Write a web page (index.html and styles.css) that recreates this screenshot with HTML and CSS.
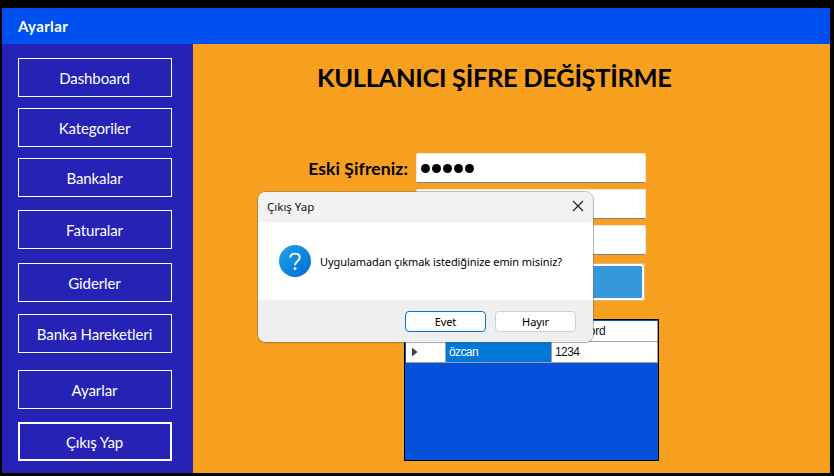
FILE: index.html
```html
<!DOCTYPE html>
<html lang="tr">
<head>
<meta charset="utf-8">
<title>Ayarlar</title>
<link rel="stylesheet" href="styles.css">
</head>
<body>
<div class="window">
  <header class="titlebar">Ayarlar</header>
  <div class="content">
    <nav class="sidebar">
      <button class="nav dashboard">Dashboard</button>
      <button class="nav categories">Kategoriler</button>
      <button class="nav banks">Bankalar</button>
      <button class="nav invoices">Faturalar</button>
      <button class="nav expenses">Giderler</button>
      <button class="nav movements">Banka Hareketleri</button>
      <button class="nav settings">Ayarlar</button>
      <button class="nav exit">Çıkış Yap</button>
    </nav>
    <main class="panel">
      <h1><span>KULLANICI ŞİFRE DEĞİŞTİRME</span></h1>
      <div class="form">
        <div class="row"><label>Eski Şifreniz:</label><div class="field"><i></i><i></i><i></i><i></i><i></i></div></div>
        <div class="row"><div class="field"></div></div>
        <div class="row"><div class="field"></div></div>
        <div class="submit"></div>
      </div>
      <div class="table">
        <div class="tr head"><div class="mark"></div><div class="td"></div><div class="td pass">Password</div></div>
        <div class="tr"><div class="mark"><svg width="6" height="10" viewBox="0 0 6 10"><path d="M0 0.5 5.5 5 0 9.5z" fill="#404040"/></svg></div><div class="td selected">özcan</div><div class="td">1234</div></div>
      </div>
    </main>
  </div>
</div>
<div class="dialog">
  <div class="dialog-title"><span>Çıkış Yap</span><svg width="12" height="12" viewBox="0 0 12 12"><path d="M1 1 11 11M11 1 1 11" stroke="#222" stroke-width="1.2" fill="none"/></svg></div>
  <div class="dialog-body">
    <svg width="32" height="32" viewBox="0 0 32 32">
      <defs><linearGradient id="g" x1="0" y1="0" x2="1" y2="1"><stop offset=".1" stop-color="#1e9fe8"/><stop offset=".9" stop-color="#0070d4"/></linearGradient></defs>
      <circle cx="16" cy="16" r="16" fill="url(#g)"/>
      <path d="M11.3 12.8C11.3 10 13.2 8.6 16 8.6c2.800 0 4.700 1.600 4.700 4 0 3.600-4.600 3.600-4.600 7.600" fill="none" stroke="#fff" stroke-width="1.900"/>
      <circle cx="16.100" cy="23.700" r="1.400" fill="#fff"/>
    </svg>
    <span>Uygulamadan çıkmak istediğinize emin misiniz?</span>
  </div>
  <div class="dialog-foot"><button class="yes">Evet</button><button>Hayır</button></div>
</div>
</body>
</html>
```
FILE: styles.css
```css
* { box-sizing: border-box; }
body { margin: 0; width: 834px; height: 476px; background: #000; padding: 8px 4px 3px 2px; overflow: hidden; }
button { margin: 0; padding: 0; white-space: nowrap; }
.window { width: 828px; height: 465px; display: flex; flex-direction: column; }
.titlebar { height: 36px; padding-left: 16px; background: #0050f0; color: #fff; font: bold 15px/37px Lato, sans-serif; letter-spacing: .35px; }
.content { flex: 1; display: flex; }
.sidebar { width: 191px; padding: 14px 0 0 16px; background: #2622b5; display: flex; flex-direction: column; }
.nav { width: 154px; height: 39px; margin-bottom: 11px; padding: 0 1px 0 0; border: 1px solid #fff; background: transparent; color: #fff; font: 15px Lato, sans-serif; letter-spacing: -.1px; }
.banks { margin-bottom: 13px; }
.invoices { margin-bottom: 14px; }
.expenses { margin-bottom: 12px; }
.movements { margin-bottom: 17px; }
.settings { margin-bottom: 13px; }
.nav.exit { border-width: 2px; }
.panel { flex: 1; background: #f7a020; }
h1 { margin: 15px 0 0 124px; height: 37px; font: bold 25.500px/36px Lato, sans-serif; letter-spacing: -.34px; white-space: nowrap; }
.form { width: 353px; margin: 57px 0 0 100px; display: flex; flex-direction: column; align-items: flex-end; gap: 6px; }
.row { display: flex; align-items: center; gap: 8px; height: 30px; }
.row label { font: bold 17.500px Lato, sans-serif; letter-spacing: .1px; white-space: nowrap; }
.field { width: 230px; height: 30px; background: #fff; border: 1px solid #e8e8e8; border-bottom-color: #808080; border-radius: 2px; display: flex; align-items: center; padding: 1px 0 0 4px; gap: 2px; }
.field i { width: 9px; height: 9px; border-radius: 50%; background: #000; }
.submit { width: 229px; height: 38px; margin: 2px 1px 0 0; background: #3498db; border: 3px solid #fff; border-radius: 4px; outline: 1px solid #d5b789; outline-offset: -1px; }
.table { width: 255px; height: 142px; margin: 18px 0 0 211px; border: 1px solid #000; background: #0551dc; padding: 1px 0 0 1px; font: 12px/20px "Liberation Sans", sans-serif; color: #111; }
.tr { display: flex; height: 21px; }
.mark, .td { background: #fff; border-right: 1px solid #a0a0a0; border-bottom: 1px solid #a0a0a0; }
.mark { width: 40px; display: flex; align-items: center; padding-left: 6px; }
.td { width: 106px; padding-left: 3px; letter-spacing: -.6px; }
.td.pass { letter-spacing: -.3px; }
.selected { background: #0078d7; color: #fff; }
.dialog { position: absolute; left: 258px; top: 192px; width: 335px; height: 150px; border-radius: 8px; overflow: hidden; background: #fff; box-shadow: 0 0 0 1px rgba(110,110,110,.45), 0 1px 2px rgba(0,0,0,.15); font: 11.500px "Noto Sans", sans-serif; }
.dialog { display: flex; flex-direction: column; }
.dialog-title { height: 30px; padding: 0 9px; background: #f2f2f2; display: flex; align-items: center; justify-content: space-between; color: #111; }
.dialog-title span { margin-top: -2px; }
.dialog-title svg { margin-top: -2px; }
.dialog-body { height: 78px; padding-left: 21px; display: flex; align-items: center; gap: 9px; font-size: 11px; letter-spacing: -.08px; white-space: nowrap; }
.dialog-foot { height: 42px; background: #efefef; display: flex; justify-content: flex-end; gap: 9px; padding: 11px 17px 0 0; }
.dialog-foot button { width: 81px; height: 21px; border: 1px solid #d0d0d0; border-radius: 4px; background: #fdfdfd; font: 11px "Noto Sans", sans-serif; color: #000; letter-spacing: -.1px; }
.dialog-foot .yes { border-color: #0078d4; }
```
